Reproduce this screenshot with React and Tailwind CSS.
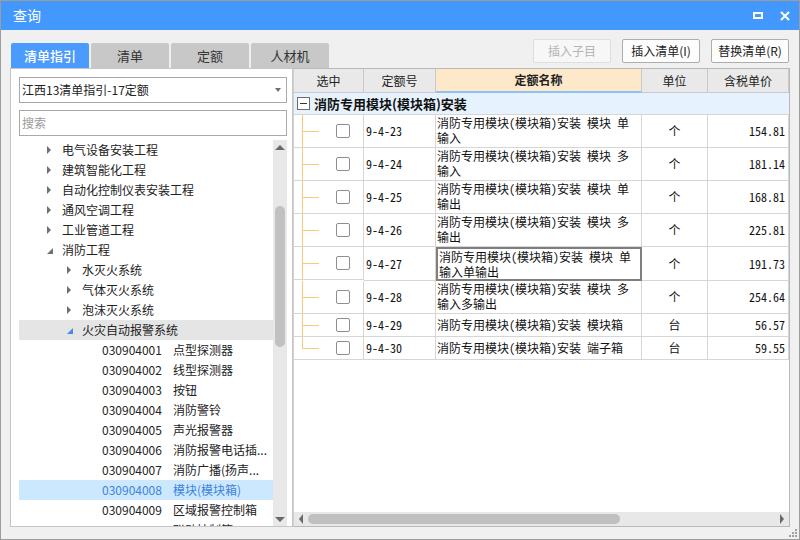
const ui = { fontFamily: '"Noto Sans CJK SC", "Noto Sans", sans-serif' };
const song = { fontFamily: '"Noto Sans Mono CJK SC", "Liberation Mono", "Noto Sans CJK SC", monospace' };

const tree = [
  { level: 1, text: '电气设备安装工程', arrow: 'right' },
  { level: 1, text: '建筑智能化工程', arrow: 'right' },
  { level: 1, text: '自动化控制仪表安装工程', arrow: 'right' },
  { level: 1, text: '通风空调工程', arrow: 'right' },
  { level: 1, text: '工业管道工程', arrow: 'right' },
  { level: 1, text: '消防工程', arrow: 'down' },
  { level: 2, text: '水灭火系统', arrow: 'right' },
  { level: 2, text: '气体灭火系统', arrow: 'right' },
  { level: 2, text: '泡沫灭火系统', arrow: 'right' },
  { level: 2, text: '火灾自动报警系统', arrow: 'down-blue', hover: true },
  { level: 3, code: '030904001', text: '点型探测器' },
  { level: 3, code: '030904002', text: '线型探测器' },
  { level: 3, code: '030904003', text: '按钮' },
  { level: 3, code: '030904004', text: '消防警铃' },
  { level: 3, code: '030904005', text: '声光报警器' },
  { level: 3, code: '030904006', text: '消防报警电话插...' },
  { level: 3, code: '030904007', text: '消防广播(扬声...' },
  { level: 3, code: '030904008', text: '模块(模块箱)', selected: true },
  { level: 3, code: '030904009', text: '区域报警控制箱' },
  { level: 3, code: '030904010', text: '联动控制箱' },
];

const rows = [
  { no: '9-4-23', name: ['消防专用模块(模块箱)安装 模块 单', '输入'], unit: '个', price: '154.81' },
  { no: '9-4-24', name: ['消防专用模块(模块箱)安装 模块 多', '输入'], unit: '个', price: '181.14' },
  { no: '9-4-25', name: ['消防专用模块(模块箱)安装 模块 单', '输出'], unit: '个', price: '168.81' },
  { no: '9-4-26', name: ['消防专用模块(模块箱)安装 模块 多', '输出'], unit: '个', price: '225.81' },
  { no: '9-4-27', name: ['消防专用模块(模块箱)安装 模块 单', '输入单输出'], unit: '个', price: '191.73', focus: true },
  { no: '9-4-28', name: ['消防专用模块(模块箱)安装 模块 多', '输入多输出'], unit: '个', price: '254.64' },
  { no: '9-4-29', name: ['消防专用模块(模块箱)安装 模块箱'], unit: '台', price: '56.57' },
  { no: '9-4-30', name: ['消防专用模块(模块箱)安装 端子箱'], unit: '台', price: '59.55' },
];

function Arrow({ kind }) {
  if (kind === 'right') {
    return <span className="block w-0 h-0 border-y-[4px] border-l-[4px] border-y-transparent border-l-[#6f6f6f]" />;
  }
  const color = kind === 'down-blue' ? '#3d8ef0' : '#6f6f6f';
  return (
    <svg width="6" height="6" viewBox="0 0 6 6" className="mt-[2px]">
      <polygon points="6,0 6,6 0,6" fill={color} />
    </svg>
  );
}

function TreeRow({ item }) {
  const arrowLeft = item.level === 1 ? 'pl-[28px]' : 'pl-[48px]';
  let bg = '';
  if (item.hover) bg = 'bg-[#e5e5e5]';
  if (item.selected) bg = 'bg-[#cce8ff]';
  if (item.level === 3) {
    return (
      <div className={`h-[20px] flex items-center pl-[83px] pr-[4px] text-[12px] whitespace-nowrap ${bg} ${item.selected ? 'text-[#3d82dc]' : 'text-[#222]'}`}>
        <span className="w-[71px] shrink-0">{item.code}</span>
        <span className="overflow-hidden">{item.text}</span>
      </div>
    );
  }
  return (
    <div className={`h-[20px] flex items-center ${arrowLeft} text-[12px] text-[#222] whitespace-nowrap ${bg}`}>
      <span className="w-[15px] shrink-0 flex items-center">
        <Arrow kind={item.arrow} />
      </span>
      <span>{item.text}</span>
    </div>
  );
}

function Btn({ children, disabled }) {
  return (
    <button
      className={`w-[78px] h-[24px] rounded-[2px] border text-[12px] ${
        disabled ? 'border-[#dedede] bg-[#f7f7f7] text-[#b4b4b4]' : 'border-[#adadad] bg-[#fdfdfd] text-[#222]'
      }`}
    >
      {children}
    </button>
  );
}

const cell = 'border-r border-b border-[#d6d6d6]';
const head = 'border-r border-b border-[#c9c9c9] bg-[#e9e9e9] flex items-center justify-center text-[12px] text-[#222]';

export default function App() {
  return (
    <div className="relative w-[800px] h-[540px] flex flex-col bg-[#f0f0f0] border border-[#9c9c9c] overflow-hidden" style={ui}>
      {/* title bar */}
      <div className="h-[29px] shrink-0 bg-[#4398fe] flex items-center justify-between pl-[12px] pr-[9px]">
        <span className="text-white text-[14px]">查询</span>
        <div className="flex items-center gap-[17px]">
          <span className="block w-[10px] h-[7px] border-2 border-white" />
          <svg width="10" height="10" viewBox="0 0 10 10">
            <path d="M1 1 L9 9 M9 1 L1 9" stroke="white" strokeWidth="2" />
          </svg>
        </div>
      </div>

      <div className="flex-1 flex flex-col px-[9px] pt-[9px] pb-[12px] min-h-0">
        {/* tabs + buttons */}
        <div className="h-[29px] shrink-0 flex justify-between">
          <div className="flex items-end gap-[2px] pl-[1px]">
            <div className="w-[78px] h-[25px] rounded-t-[2px] bg-[#4a9bfd] text-white text-[13px] font-medium flex items-center justify-center">清单指引</div>
            <div className="w-[78px] h-[25px] rounded-t-[2px] bg-[#c8c8c8] text-[#333] text-[13px] flex items-center justify-center">清单</div>
            <div className="w-[78px] h-[25px] rounded-t-[2px] bg-[#c8c8c8] text-[#333] text-[13px] flex items-center justify-center">定额</div>
            <div className="w-[78px] h-[25px] rounded-t-[2px] bg-[#c8c8c8] text-[#333] text-[13px] flex items-center justify-center">人材机</div>
          </div>
          <div className="flex items-start gap-[11px] pr-[1px]">
            <Btn disabled>插入子目</Btn>
            <Btn>插入清单(I)</Btn>
            <Btn>替换清单(R)</Btn>
          </div>
        </div>

        {/* main area */}
        <div className="flex-1 flex min-h-0">
          {/* left panel */}
          <div className="w-[283px] shrink-0 bg-white border border-[#c6c6c6] flex flex-col pl-[8px] pr-[5px] pt-[8px]">
            <div className="h-[26px] shrink-0 border border-[#a9a9a9] flex items-center justify-between pl-[2px] pr-[5px]">
              <span className="text-[12px] text-[#222]">江西13清单指引-17定额</span>
              <span className="block w-0 h-0 border-x-[3.5px] border-t-[4px] border-x-transparent border-t-[#707070]" />
            </div>
            <div className="h-[26px] shrink-0 mt-[7px] border border-[#a9a9a9] flex items-center pl-[2px]">
              <span className="text-[12px] text-[#9a9a9a]">搜索</span>
            </div>
            <div className="flex-1 flex mt-[4px] min-h-0 overflow-hidden">
              <div className="flex-1 min-w-0 overflow-hidden">
                {tree.map((t, i) => (
                  <TreeRow key={i} item={t} />
                ))}
              </div>
              <div className="w-[14px] shrink-0 bg-[#e8e8e8] flex flex-col items-center">
                <span className="block mt-[5px] w-0 h-0 border-x-[5px] border-b-[5px] border-x-transparent border-b-[#6a6a6a]" />
                <div className="mt-[56px] w-[10px] h-[141px] rounded-[5px] bg-[#c1c1c1]" />
                <div className="flex-1" />
                <span className="block mb-[4px] w-0 h-0 border-x-[5px] border-t-[5px] border-x-transparent border-t-[#6a6a6a]" />
              </div>
            </div>
          </div>

          {/* grid */}
          <div className="flex-1 min-w-0 bg-white border border-[#b9b9b9] border-l-[#d0d0d0] flex flex-col" style={song}>
            <div className="flex-1 min-h-0 overflow-hidden">
              <div className="grid grid-cols-[70px_72px_206px_66px_81px]">
                <div className={`${head} h-[24px]`} style={ui}>选中</div>
                <div className={head} style={ui}>定额号</div>
                <div className="border-r border-b-2 border-[#c9c9c9] border-b-[#8fc3f5] bg-[#fde8ca] flex items-center justify-center text-[12px] font-bold text-[#222]" style={ui}>定额名称</div>
                <div className={head} style={ui}>单位</div>
                <div className={head} style={ui}>含税单价</div>

                <div className="col-span-5 h-[22px] bg-[#e6f2fd] border-b border-[#d6d6d6] flex items-center pl-[3px]">
                  <span className="w-[13px] h-[13px] border border-[#6b6b6b] bg-white flex items-center justify-center mr-[4px]">
                    <span className="block w-[7px] h-[1px] bg-[#333]" />
                  </span>
                  <span className="text-[13px] font-bold text-[#111]" style={ui}>消防专用模块(模块箱)安装</span>
                </div>

                {rows.map((r, i) => {
                  const h = r.name.length > 1 ? 'h-[33px]' : 'h-[23px]';
                  const last = i === rows.length - 1;
                  return [
                    <div key={`c${i}`} className={`${cell} ${h} relative flex items-center`}>
                      <span className={`absolute left-[8px] top-0 w-[1px] bg-[#fbc97a] ${last ? 'h-1/2' : 'h-full'}`} />
                      <span className="absolute left-[8px] top-1/2 w-[17px] h-[1px] bg-[#fbc97a]" />
                      <span className="ml-[42px] w-[14px] h-[14px] rounded-[2px] border border-[#8e8e8e] bg-white" />
                    </div>,
                    <div key={`n${i}`} className={`${cell} flex items-center pl-[2px] text-[12px] text-[#111]`}>{r.no}</div>,
                    <div
                      key={`m${i}`}
                      className={`${r.focus ? 'border-2 border-[#7f7f7f]' : cell} pl-[1px] text-[12px] leading-[15px] text-[#111] whitespace-nowrap`}
                    >
                      {r.name.map((l, k) => (
                        <div key={k} className={r.name.length === 1 ? 'leading-[21px]' : ''}>{l}</div>
                      ))}
                    </div>,
                    <div key={`u${i}`} className={`${cell} flex items-center justify-center text-[12px] text-[#111]`}>{r.unit}</div>,
                    <div key={`p${i}`} className={`${cell} flex items-center justify-end pr-[3px] text-[12px] text-[#111]`}>{r.price}</div>,
                  ];
                })}
              </div>
            </div>
            {/* horizontal scrollbar */}
            <div className="h-[14px] shrink-0 bg-[#e8e8e8] flex items-center px-[5px]">
              <span className="block w-0 h-0 border-y-[5px] border-r-[4px] border-y-transparent border-r-[#6a6a6a]" />
              <div className="ml-[5px] w-[312px] h-[10px] rounded-[5px] bg-[#c0c0c0]" />
              <div className="flex-1" />
              <span className="block w-0 h-0 border-y-[5px] border-l-[4px] border-y-transparent border-l-[#6a6a6a]" />
            </div>
          </div>
        </div>
      </div>

      {/* resize grip */}
      <svg className="absolute right-[2px] bottom-[2px]" width="8" height="8" viewBox="0 0 8 8">
        <rect x="6" y="0" width="2" height="2" fill="#a0a0a0" />
        <rect x="3" y="3" width="2" height="2" fill="#a0a0a0" />
        <rect x="6" y="3" width="2" height="2" fill="#a0a0a0" />
        <rect x="0" y="6" width="2" height="2" fill="#a0a0a0" />
        <rect x="3" y="6" width="2" height="2" fill="#a0a0a0" />
        <rect x="6" y="6" width="2" height="2" fill="#a0a0a0" />
      </svg>
    </div>
  );
}
